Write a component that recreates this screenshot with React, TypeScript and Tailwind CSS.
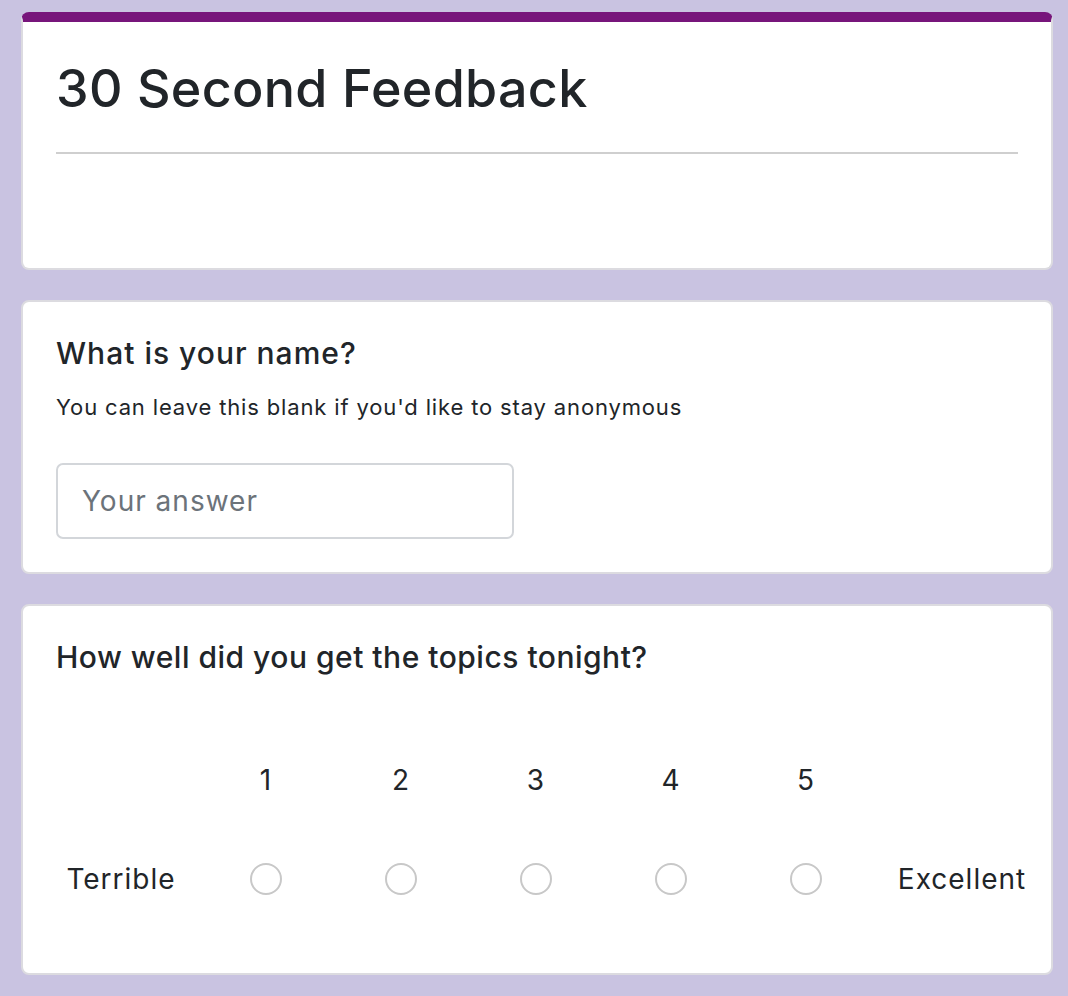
import React from 'react';

const font = { fontFamily: 'Inter, "Noto Sans", sans-serif' };

function Card({ children, className = '' }: { children: React.ReactNode; className?: string }) {
  return <div className={`bg-white rounded-[8px] border-2 border-[#dcdbe0] ${className}`}>{children}</div>;
}

const scale = [1, 2, 3, 4, 5];

export default function App() {
  return (
    <div className="min-h-screen bg-[#c9c3e1] pt-[12px] pl-[21px] pr-[15px] pb-[20px] text-[#212529]" style={font}>
      <div className="flex flex-col gap-[30px]">
        <Card className="h-[258px] border-t-[10px] border-t-[#77157b]">
          <div className="px-[33px] pt-[37px]">
            <h1 className="text-[52px] font-medium leading-[60px] tracking-[0.3px]">30 Second Feedback</h1>
            <div className="mt-[33px] h-[2px] bg-[#cfcfcf]" />
          </div>
        </Card>

        <Card className="h-[274px]">
          <div className="px-[33px] pt-[33px]">
            <h2 className="text-[30px] font-medium leading-[36px] tracking-[1px]">What is your name?</h2>
            <p className="mt-[22px] text-[22px] leading-[28px] tracking-[0.85px]">You can leave this blank if you'd like to stay anonymous</p>
            <input
              type="text"
              placeholder="Your answer"
              className="mt-[42px] w-[458px] h-[76px] rounded-[7px] border-2 border-[#d3d6da] px-[24px] text-[28px] tracking-[1px] placeholder:text-[#6c737a] outline-none"
            />
          </div>
        </Card>

        <Card className="h-[371px]">
          <div className="pl-[33px] pt-[33px]">
            <h2 className="text-[30px] font-medium leading-[36px] tracking-[0.5px]">How well did you get the topics tonight?</h2>
            <div className="mt-[88px] flex">
              <div className="w-[142px] shrink-0" />
              {scale.map((n) => (
                <div key={n} className="w-[135px] shrink-0 text-center text-[28px] leading-[34px]">{n}</div>
              ))}
            </div>
            <div className="mt-[65px] flex items-center">
              <div className="w-[130px] shrink-0 text-center text-[28px] leading-[34px] tracking-[1px]">Terrible</div>
              <div className="w-[12px] shrink-0" />
              {scale.map((n) => (
                <div key={n} className="w-[135px] shrink-0 flex justify-center">
                  <span className="w-[32px] h-[32px] rounded-full border-2 border-[#c8c8c8] bg-white" />
                </div>
              ))}
              <div className="w-[178px] shrink-0 text-center text-[28px] leading-[34px] tracking-[1px]">Excellent</div>
            </div>
          </div>
        </Card>
      </div>
    </div>
  );
}
